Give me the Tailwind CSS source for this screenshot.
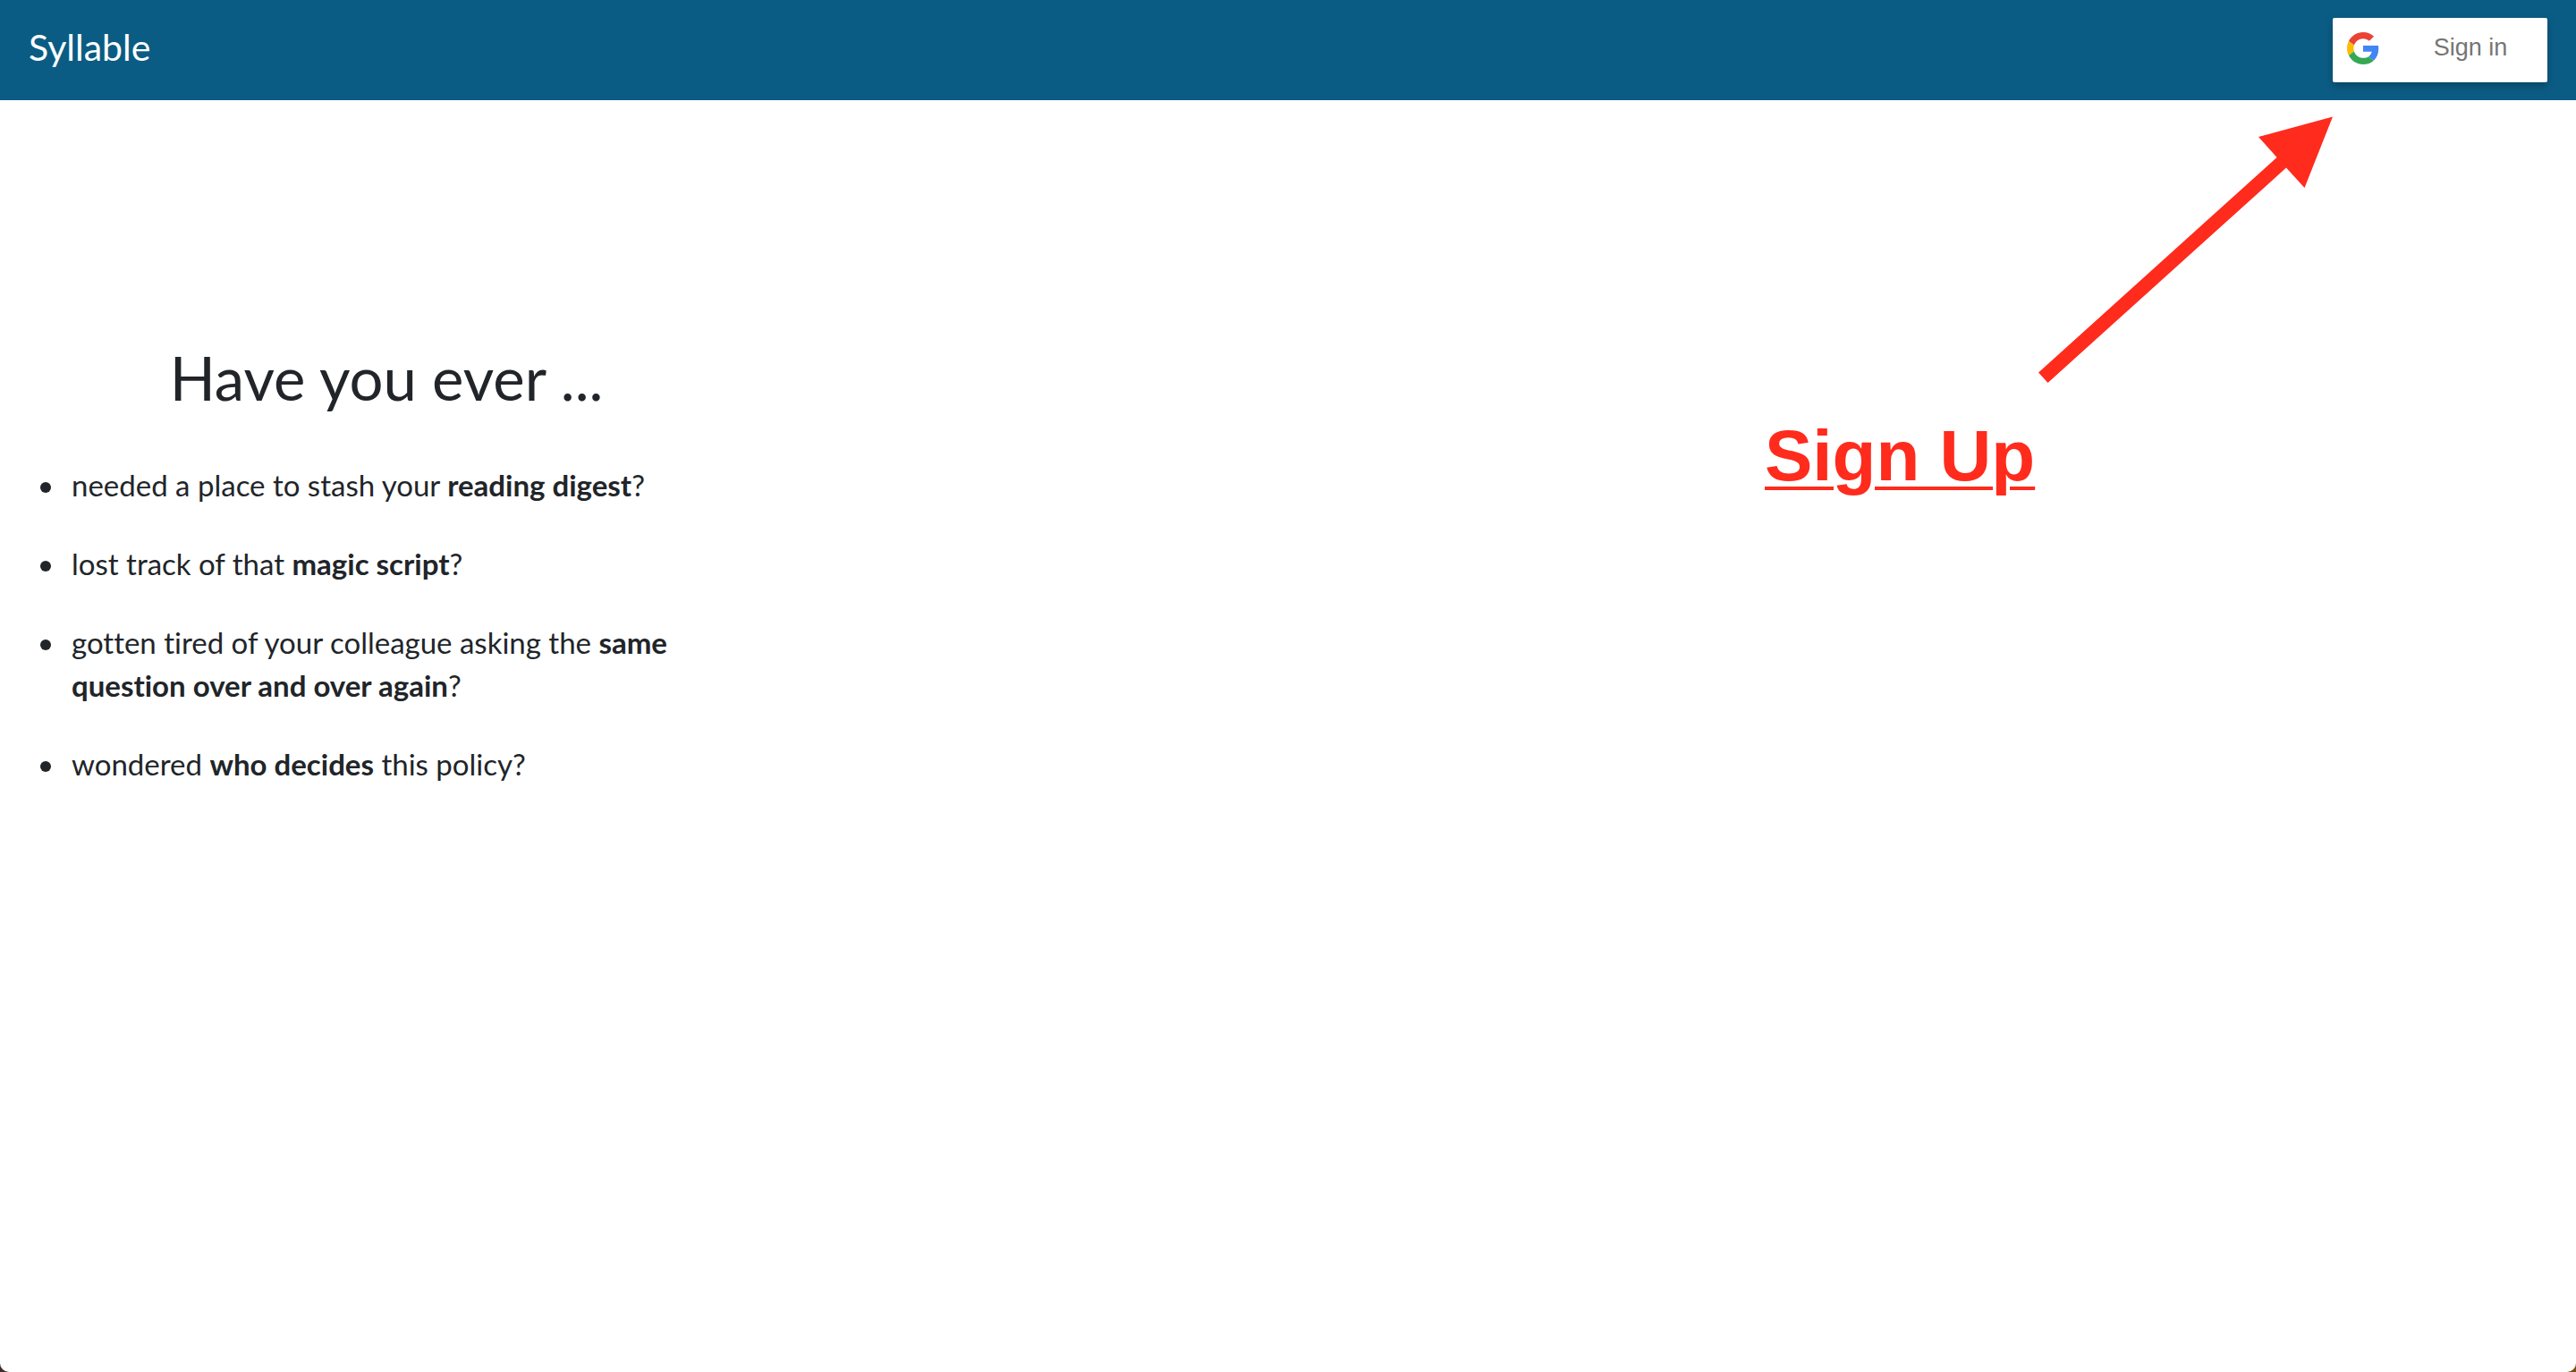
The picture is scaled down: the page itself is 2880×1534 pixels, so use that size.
<!DOCTYPE html>
<html lang="en">
<head>
<meta charset="utf-8">
<title>Syllable</title>
<script src="https://cdn.jsdelivr.net/npm/@tailwindcss/browser@4"></script>
</head>
<body class="min-h-screen flex bg-linear-to-r from-[#3f2d2a] to-[#7a4d14] font-['Lato',sans-serif] [font-variant-ligatures:none] text-[#212529]">
<div class="flex flex-col grow bg-white rounded-b-[10px]">
  <header class="flex items-center justify-between h-28 px-8 bg-[#0b5c84]">
    <a href="#" class="pb-1.5 text-[41px] leading-[60px] text-white">Syllable</a>
    <button type="button" class="flex items-center w-60 h-[72px] pl-4 pb-1 bg-white rounded-[2px] shadow-[0_4px_8px_rgba(0,0,0,0.25)] font-['Liberation_Sans',sans-serif] text-[27px] text-[#757575]">
      <svg class="size-9 shrink-0" viewBox="0 0 48 48" aria-hidden="true">
        <path fill="#EA4335" d="M24 9.5c3.54 0 6.71 1.22 9.21 3.6l6.85-6.85C35.9 2.38 30.47 0 24 0 14.62 0 6.51 5.38 2.56 13.22l7.98 6.19C12.43 13.72 17.74 9.5 24 9.5z"/>
        <path fill="#4285F4" d="M46.98 24.55c0-1.57-.15-3.09-.38-4.55H24v9.02h12.94c-.58 2.96-2.26 5.48-4.78 7.18l7.73 6c4.51-4.18 7.09-10.36 7.09-17.65z"/>
        <path fill="#FBBC05" d="M10.53 28.59c-.48-1.45-.76-2.99-.76-4.59s.27-3.14.76-4.59l-7.98-6.19C.92 16.46 0 20.12 0 24c0 3.88.92 7.54 2.56 10.78l7.97-6.19z"/>
        <path fill="#34A853" d="M24 48c6.48 0 11.93-2.13 15.89-5.81l-7.73-6c-2.15 1.45-4.92 2.3-8.16 2.3-6.26 0-11.57-4.22-13.47-9.91l-7.98 6.19C6.51 42.62 14.62 48 24 48z"/>
      </svg>
      <span class="grow pl-4 pb-0.5 text-center">Sign in</span>
    </button>
  </header>

  <main class="flex justify-between items-start">
    <section class="w-[30%] pt-[270px] pl-20 pr-8">
      <h1 class="-ml-12 mb-14 text-center text-[67px] leading-[80px]">Have you ever ...</h1>
      <ul class="flex flex-col gap-10 text-[33px] leading-[48px]">
        <li class="relative before:absolute before:-left-[35px] before:top-[21px] before:size-3 before:rounded-full before:bg-current">needed a place to stash your <b>reading digest</b>?</li>
        <li class="relative before:absolute before:-left-[35px] before:top-[21px] before:size-3 before:rounded-full before:bg-current">lost track of that <b>magic script</b>?</li>
        <li class="relative before:absolute before:-left-[35px] before:top-[21px] before:size-3 before:rounded-full before:bg-current">gotten tired of your colleague asking the <b>same question over and over again</b>?</li>
        <li class="relative before:absolute before:-left-[35px] before:top-[21px] before:size-3 before:rounded-full before:bg-current">wondered <b>who decides</b> this policy?</li>
      </ul>
    </section>

    <aside class="flex flex-col gap-[42px] w-[635px] mt-[18px] mr-[272px] text-[#ff2b1d]">
      <svg class="self-end w-[329px] h-[298px]" viewBox="0 0 329 298" fill="currentColor" aria-hidden="true">
        <path d="M329 0.5 246 23 266.500 46 0 286.500 10.500 298 277 57.500 297.500 80z"/>
      </svg>
      <p class="font-['Liberation_Sans',sans-serif] font-bold text-[80px] leading-[80px] underline decoration-4 underline-offset-[7px]">Sign Up</p>
    </aside>
  </main>
</div>
</body>
</html>
